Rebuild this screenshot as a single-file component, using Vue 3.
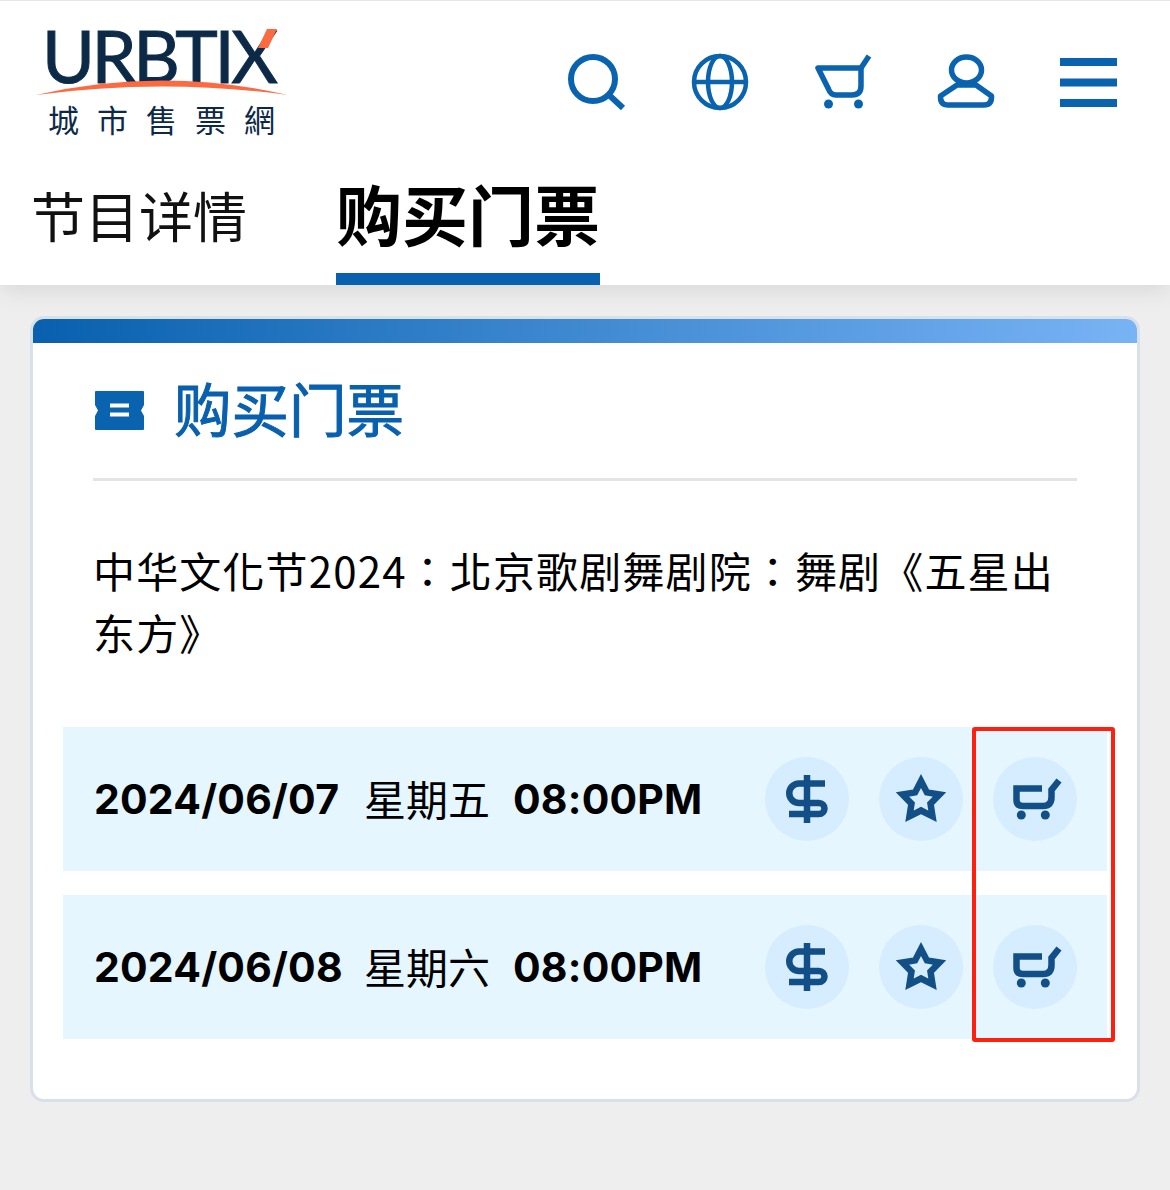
<script setup>
const rows = [
  { date: '2024/06/07', day: '星期五', time: '08:00PM' },
  { date: '2024/06/08', day: '星期六', time: '08:00PM' },
];
</script>

<template>
  <div class="page">
    <header class="header">
      <div class="top">
        <div class="logo">
          <span class="logo-en">URBTIX</span>
          <span class="logo-zh">城市售票網</span>
          <svg class="swoosh" width="256" height="70" viewBox="0 0 256 70">
            <path d="M0 67 Q126 38 252 67 Q126 50 0 67Z" fill="#fb6a41" />
            <path d="M231 1 H241 L232 20 H222Z" fill="#fb6a41" />
          </svg>
        </div>
        <nav class="icons">
          <svg width="64" height="64" viewBox="0 0 64 64" fill="none" stroke="#0a63ae">
            <circle cx="28" cy="29" r="22" stroke-width="6" />
            <path d="M44 45 L58 58" stroke-width="6" />
          </svg>
          <svg width="64" height="64" viewBox="0 0 64 64" fill="none" stroke="#0a63ae" stroke-width="4.5">
            <circle cx="32" cy="32" r="26" />
            <ellipse cx="32" cy="32" rx="12" ry="26" />
            <path d="M6 32 H58" />
          </svg>
          <svg width="64" height="64" viewBox="0 0 64 64" fill="none" stroke="#0a63ae" stroke-width="5.5">
            <path d="M7 18 H50 V36 Q50 45 41 45 H25 Q19.5 45 17.5 39Z" stroke-linejoin="round" />
            <path d="M50 18 L58 6" />
            <circle cx="17.5" cy="54" r="4.5" fill="#0a63ae" stroke="none" />
            <circle cx="47.5" cy="54" r="4.5" fill="#0a63ae" stroke="none" />
          </svg>
          <svg width="64" height="64" viewBox="0 0 64 64" fill="none" stroke="#0a63ae" stroke-width="5.5">
            <ellipse cx="32.5" cy="20" rx="15" ry="13" />
            <path d="M23 35 H42 L57.5 46 V47 Q57.5 55 50 55 H14 Q6.5 55 6.5 47 V46Z" stroke-linejoin="round" />
          </svg>
          <svg width="64" height="64" viewBox="0 0 64 64" fill="#0a63ae">
            <rect x="3" y="8" width="57" height="8" />
            <rect x="3" y="28.5" width="57" height="8" />
            <rect x="3" y="49" width="57" height="8" />
          </svg>
        </nav>
      </div>
      <div class="tabs">
        <span class="tab">节目详情</span>
        <span class="tab active">购买门票</span>
      </div>
    </header>

    <main class="main">
      <section class="card">
        <div class="bar"></div>
        <div class="body">
          <div class="title">
            <svg width="49" height="39" viewBox="0 0 49 39">
              <path
                fill="#0a63ae"
                fill-rule="evenodd"
                d="M1 0 H48 Q49 0 49 1 V14 L46 19.5 L49 25 V38 Q49 39 48 39 H1 Q0 39 0 38 V25 L3 19.5 L0 14 V1 Q0 0 1 0Z M15 12.5 V16.5 H34 V12.5Z M15 21.5 V25.5 H34 V21.5Z"
              />
            </svg>
            <h2>购买门票</h2>
          </div>
          <p class="desc">中华文化节2024：北京歌剧舞剧院：舞剧《五星出东方》</p>
          <div class="rows">
            <div v-for="row in rows" :key="row.date" class="row">
              <div class="when">
                <b class="date">{{ row.date }}</b>
                <span class="day">{{ row.day }}</span>
                <b class="time">{{ row.time }}</b>
              </div>
              <div class="actions">
                <span class="circle">
                  <svg width="56" height="56" viewBox="0 0 56 56" fill="none" stroke="#124f86" stroke-width="6.5">
                    <path d="M28 4 V52" />
                    <path d="M46 12.5 H20 A9.7 9.7 0 0 0 20 32 H40 A5.5 5.5 0 0 1 40 43 H10" />
                  </svg>
                </span>
                <span class="circle">
                  <svg width="56" height="56" viewBox="0 0 56 56" fill="none" stroke="#124f86" stroke-width="6.5" stroke-miterlimit="10">
                    <path d="M28 10 L33.9 21.4 L46.5 23.5 L37.5 32.6 L39.5 45.3 L28 39.5 L16.5 45.3 L18.5 32.6 L9.5 23.5 L22.1 21.4Z" />
                  </svg>
                </span>
                <span class="circle">
                  <svg width="56" height="56" viewBox="0 0 56 56" fill="none" stroke="#124f86" stroke-width="6.5">
                    <path d="M35 17.5 H9.5 V29 Q9.5 35 16 35 H36 Q44.5 35 44.5 26 V19 L52 9.5" />
                    <circle cx="14.3" cy="44" r="4.5" fill="#124f86" stroke="none" />
                    <circle cx="38.3" cy="44" r="4.5" fill="#124f86" stroke="none" />
                  </svg>
                </span>
              </div>
            </div>
            <div class="mark"></div>
          </div>
        </div>
      </section>
    </main>
  </div>
</template>

<style>
body {
  background: #eeeeee;
}
</style>

<style scoped>
.page {
  min-height: 1190px;
  background: #eeeeee;
  font-family: "Noto Sans CJK SC", "Noto Sans", sans-serif;
  color: #000;
}

.header {
  height: 285px;
  box-sizing: border-box;
  background: #fff;
  border-top: 1px solid #e6e6e6;
  box-shadow: 0 4px 24px rgba(0, 0, 0, 0.1);
  position: relative;
}

.top {
  height: 162px;
  display: flex;
  justify-content: space-between;
  padding: 0 49px 0 36px;
}

.logo {
  position: relative;
  width: 256px;
  height: 140px;
}

.logo-en {
  display: block;
  margin: 22px 0 0 6px;
  font-family: "Lato", sans-serif;
  font-size: 72px;
  line-height: 64px;
  letter-spacing: -3.4px;
  font-weight: 400;
  -webkit-text-stroke: 1px #0c2a47;
  color: #0c2a47;
  white-space: nowrap;
}

.logo-zh {
  display: block;
  margin: 14px 0 0 12px;
  font-size: 31px;
  line-height: 36px;
  letter-spacing: 18px;
  font-weight: 400;
  color: #0c2a47;
  white-space: nowrap;
}

.swoosh {
  position: absolute;
  left: 0;
  top: 27px;
}

.icons {
  display: flex;
  gap: 59px;
  padding-top: 49px;
}

.tabs {
  display: flex;
  align-items: flex-end;
  height: 122px;
  padding-left: 31px;
  gap: 89px;
}

.tab {
  font-size: 54px;
  line-height: 104px;
  margin-bottom: 18px;
  color: #111;
  white-space: nowrap;
}

.tab.active {
  font-size: 66px;
  font-weight: 700;
  color: #000;
  line-height: 98px;
  height: 110px;
  margin-bottom: 0;
  border-bottom: 12px solid #0860ae;
}

.main {
  padding: 31px 30px 0;
}

.card {
  box-sizing: border-box;
  height: 786px;
  background: #fff;
  border: 3px solid #d8e0ea;
  border-radius: 14px;
  overflow: hidden;
}

.bar {
  height: 24px;
  background: linear-gradient(90deg, #0860ae, #78b3f5);
}

.body {
  padding: 0 30px;
}

.title {
  height: 135px;
  margin: 0 30px;
  display: flex;
  align-items: center;
  gap: 30px;
  padding-left: 2px;
  border-bottom: 3px solid #e4e4e4;
}

.title h2 {
  margin: 0 0 8px;
  font-size: 57.5px;
  font-weight: 400;
  -webkit-text-stroke: 1px #0860ae;
  line-height: 80px;
  color: #0860ae;
}

.desc {
  margin: 58px 30px 64px 30px;
  font-family: "Noto Sans CJK TC", "Noto Sans CJK SC", sans-serif;
  font-size: 42px;
  line-height: 62px;
  letter-spacing: 1.15px;
  color: #000;
}

.rows {
  position: relative;
  display: flex;
  flex-direction: column;
  gap: 24px;
}

.row {
  height: 144px;
  background: #e5f6ff;
  display: flex;
  align-items: center;
  justify-content: space-between;
  padding: 0 30px 0 31px;
}

.when {
  display: flex;
  align-items: center;
  white-space: nowrap;
}

.date,
.time {
  font-family: "Inter", sans-serif;
  font-weight: 700;
  font-size: 41px;
  letter-spacing: 0.2px;
}

.date {
  width: 246px;
}

.day {
  font-size: 42px;
  margin: 0 23px 0 24px;
  padding-bottom: 3px;
}

.actions {
  display: flex;
  gap: 30px;
}

.circle {
  width: 84px;
  height: 84px;
  border-radius: 50%;
  background: #d6ecff;
  display: flex;
  align-items: center;
  justify-content: center;
}

.mark {
  position: absolute;
  left: 909px;
  top: 0;
  width: 143px;
  height: 315px;
  box-sizing: border-box;
  border: 4px solid #ff1f0f;
  border-radius: 3px;
}
</style>
